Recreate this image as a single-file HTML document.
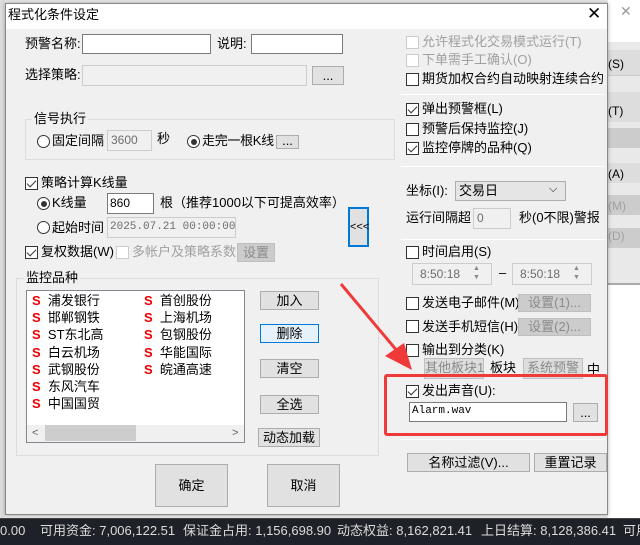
<!DOCTYPE html>
<html><head><meta charset="utf-8"><style>
*{margin:0;padding:0;box-sizing:border-box}
body{width:640px;height:545px;position:relative;overflow:hidden;background:#e9e9e9;font-family:"Liberation Sans","Noto Sans CJK SC",sans-serif;font-size:13px;color:#000}
.a{position:absolute;white-space:nowrap;line-height:16px}
.in{position:absolute;background:#fff;border:1px solid #7a7a7a;white-space:nowrap;overflow:hidden}
.dis{position:absolute;background:#f0f0f0;border:1px solid #ccc;color:#6d6d6d;font-size:12px;padding-left:3px;line-height:18px;white-space:nowrap;overflow:hidden}
.btn{position:absolute;background:#e1e1e1;border:1px solid #adadad;text-align:center;line-height:17px;white-space:nowrap}
.bd{position:absolute;background:#ccc;border:1px solid #bfbfbf;color:#8a8a8a;text-align:center;white-space:nowrap}
.cb{position:absolute;width:13px;height:13px;border:1px solid #333;background:#fff}
.cb.c::after{content:"";position:absolute;left:3px;top:0px;width:4px;height:8px;border:solid #333;border-width:0 1.5px 1.5px 0;transform:rotate(45deg)}
.cb.d{border-color:#ccc}
.rd{position:absolute;width:13px;height:13px;border:1px solid #333;border-radius:50%;background:#fff}
.rd.s::after{content:"";position:absolute;left:2.5px;top:2.5px;width:6px;height:6px;border-radius:50%;background:#333}
.hl{position:absolute;height:1px;background:#a0a0a0;border-bottom:1px solid #fff}
.gb{position:absolute;border:1px solid #dcdcdc}
.s{color:#e00;font-weight:bold;font-family:"Liberation Sans",sans-serif}
.gray{color:#a0a0a0}
</style></head><body>
<div style="position:absolute;left:608px;top:0;width:32px;height:42px;background:#fff"></div>
<div class="a" style="left:620px;top:3px;color:#999;font-size:14px">✕</div>
<div style="position:absolute;left:608px;top:50px;width:32px;height:26px;background:#ddd;border-bottom:1px solid #ccc"></div>
<div class="a" style="left:608px;top:56px;font-size:12px">(S)</div>
<div style="position:absolute;left:608px;top:92px;width:32px;height:30px;background:#ddd"></div>
<div class="a" style="left:608px;top:103px;font-size:12px">(T)</div>
<div style="position:absolute;left:608px;top:128px;width:32px;height:20px;background:#ccc"></div>
<div style="position:absolute;left:608px;top:163px;width:32px;height:20px;background:#ddd"></div>
<div class="a" style="left:608px;top:166px;font-size:12px">(A)</div>
<div style="position:absolute;left:608px;top:195px;width:32px;height:20px;background:#ccc"></div>
<div class="a gray" style="left:608px;top:198px;font-size:12px">(M)</div>
<div style="position:absolute;left:608px;top:228px;width:32px;height:20px;background:#ccc"></div>
<div class="a gray" style="left:608px;top:228px;font-size:12px">(D)</div>
<div style="position:absolute;left:608px;top:283px;width:32px;height:235px;background:#fff;border-top:2px solid #aaa"></div>
<div style="position:absolute;left:0;top:0;width:5px;height:518px;background:#ddd"></div>
<div style="position:absolute;left:5px;top:3px;width:603px;height:512px;background:#f0f0f0;border:1px solid #888;box-shadow:0 0 4px rgba(0,0,0,.3)"></div>
<div style="position:absolute;left:6px;top:4px;width:601px;height:25px;background:#fff"></div>
<div class="a" style="left:8px;top:7px;font-size:13px">程式化条件设定</div>
<div class="a" style="left:587px;top:6px;font-size:17px;font-weight:300">✕</div>

<div class="a" style="left:25px;top:36px">预警名称:</div>
<div class="in" style="left:82px;top:34px;width:129px;height:20px"></div>
<div class="a" style="left:217px;top:36px">说明:</div>
<div class="in" style="left:251px;top:34px;width:92px;height:20px"></div>
<div class="a" style="left:25px;top:67px">选择策略:</div>
<div class="dis" style="left:82px;top:65px;width:225px;height:21px"></div>
<div class="btn" style="left:312px;top:66px;width:32px;height:19px">...</div>

<div class="gb" style="left:25px;top:119px;width:370px;height:41px"></div>
<div class="a" style="left:32px;top:111px;background:#f0f0f0;padding:0 2px">信号执行</div>
<div class="rd" style="left:37px;top:135px"></div>
<div class="a" style="left:52px;top:133px">固定间隔</div>
<div class="dis" style="left:107px;top:130px;width:45px;height:21px">3600</div>
<div class="a" style="left:157px;top:131px">秒</div>
<div class="rd s" style="left:187px;top:135px"></div>
<div class="a" style="left:202px;top:133px;letter-spacing:-0.3px">走完一根K线</div>
<div class="btn" style="left:276px;top:135px;width:23px;height:14px;line-height:10px">...</div>

<div class="cb c" style="left:25px;top:177px"></div>
<div class="a" style="left:41px;top:175px">策略计算K线量</div>
<div class="rd s" style="left:37px;top:197px"></div>
<div class="a" style="left:52px;top:195px">K线量</div>
<div class="in" style="left:107px;top:193px;width:47px;height:21px;font-size:12px;padding-left:2px;line-height:18px">860</div>
<div class="a" style="left:160px;top:195px">根（推荐1000以下可提高效率）</div>
<div class="rd" style="left:37px;top:221px"></div>
<div class="a" style="left:52px;top:220px">起始时间</div>
<div class="dis" style="left:107px;top:217px;width:129px;height:21px;font-family:'Liberation Mono',monospace;font-size:11px;padding-left:2px">2025.07.21 00:00:00</div>
<div class="cb c" style="left:25px;top:246px"></div>
<div class="a" style="left:41px;top:244px">复权数据(W)</div>
<div class="cb d" style="left:116px;top:246px"></div>
<div class="a gray" style="left:132px;top:244px">多帐户及策略系数</div>
<div class="bd" style="left:237px;top:243px;width:38px;height:19px;line-height:17px">设置</div>

<div class="gb" style="left:16px;top:278px;width:363px;height:178px"></div>
<div class="a" style="left:24px;top:270px;background:#f0f0f0;padding:0 2px">监控品种</div>
<div class="in" style="left:26px;top:290px;width:219px;height:153px;border-color:#828790"></div>
<div style="position:absolute;left:27px;top:425px;width:217px;height:17px;background:#f0f0f0"></div>
<div style="position:absolute;left:45px;top:425px;width:91px;height:16px;background:#cdcdcd"></div>
<div class="a" style="left:32px;top:425px;color:#606060;font-size:11px">&lt;</div>
<div class="a" style="left:232px;top:425px;color:#606060;font-size:11px">&gt;</div>
<div class="a" style="left:32px;top:292px;line-height:17.2px"><span class="s">S</span>&nbsp; 浦发银行<br><span class="s">S</span>&nbsp; 邯郸钢铁<br><span class="s">S</span>&nbsp; ST东北高<br><span class="s">S</span>&nbsp; 白云机场<br><span class="s">S</span>&nbsp; 武钢股份<br><span class="s">S</span>&nbsp; 东风汽车<br><span class="s">S</span>&nbsp; 中国国贸</div>
<div class="a" style="left:144px;top:292px;line-height:17.2px"><span class="s">S</span>&nbsp; 首创股份<br><span class="s">S</span>&nbsp; 上海机场<br><span class="s">S</span>&nbsp; 包钢股份<br><span class="s">S</span>&nbsp; 华能国际<br><span class="s">S</span>&nbsp; 皖通高速</div>
<div class="btn" style="left:260px;top:291px;width:59px;height:19px">加入</div>
<div class="btn" style="left:260px;top:324px;width:59px;height:19px;background:#e5f1fb;border-color:#0078d7">删除</div>
<div class="btn" style="left:260px;top:359px;width:59px;height:19px">清空</div>
<div class="btn" style="left:260px;top:395px;width:59px;height:19px">全选</div>
<div class="btn" style="left:258px;top:428px;width:62px;height:19px">动态加载</div>
<div class="btn" style="left:155px;top:464px;width:73px;height:43px;line-height:41px">确定</div>
<div class="btn" style="left:267px;top:464px;width:73px;height:43px;line-height:41px">取消</div>
<div class="btn" style="left:348px;top:207px;width:21px;height:40px;border:2px solid #0078d7;line-height:36px;font-size:11px">&lt;&lt;&lt;</div>

<div class="cb d" style="left:406px;top:36px"></div>
<div class="a gray" style="left:422px;top:34px">允许程式化交易模式运行(T)</div>
<div class="cb d" style="left:406px;top:54px"></div>
<div class="a gray" style="left:422px;top:52px">下单需手工确认(O)</div>
<div class="cb" style="left:406px;top:73px"></div>
<div class="a" style="left:422px;top:71px">期货加权合约自动映射连续合约</div>
<div class="hl" style="left:401px;top:94px;width:204px"></div>
<div class="cb c" style="left:406px;top:103px"></div>
<div class="a" style="left:422px;top:101px">弹出预警框(L)</div>
<div class="cb" style="left:406px;top:123px"></div>
<div class="a" style="left:422px;top:121px">预警后保持监控(J)</div>
<div class="cb c" style="left:406px;top:142px"></div>
<div class="a" style="left:422px;top:140px">监控停牌的品种(Q)</div>
<div class="hl" style="left:401px;top:166px;width:204px"></div>
<div class="a" style="left:406px;top:183px">坐标(I):</div>
<div style="position:absolute;left:455px;top:181px;width:111px;height:20px;background:#e5e5e5;border:1px solid #adadad"></div>
<div class="a" style="left:459px;top:183px">交易日</div>
<div class="a" style="left:549px;top:181px;font-size:11px">⌵</div>
<div class="a" style="left:406px;top:210px">运行间隔超</div>
<div class="dis" style="left:473px;top:208px;width:38px;height:21px">0</div>
<div class="a" style="left:519px;top:210px">秒(0不限)警报</div>
<div class="hl" style="left:401px;top:239px;width:204px"></div>
<div class="cb" style="left:406px;top:246px"></div>
<div class="a" style="left:422px;top:244px">时间启用(S)</div>
<div class="dis" style="left:412px;top:263px;width:80px;height:22px;font-size:12px;padding-left:7px;line-height:20px">8:50:18</div>
<div class="dis" style="left:512px;top:263px;width:80px;height:22px;font-size:12px;padding-left:7px;line-height:20px">8:50:18</div>
<div class="a" style="left:473px;top:264px;font-size:7px;color:#888;line-height:9px">▲<br>▼</div>
<div class="a" style="left:573px;top:264px;font-size:7px;color:#888;line-height:9px">▲<br>▼</div>
<div class="a" style="left:499px;top:265px">–</div>
<div class="cb" style="left:406px;top:297px"></div>
<div class="a" style="left:422px;top:295px">发送电子邮件(M)</div>
<div class="bd" style="left:518px;top:294px;width:73px;height:18px;line-height:16px">设置(1)...</div>
<div class="cb" style="left:406px;top:320px"></div>
<div class="a" style="left:422px;top:319px">发送手机短信(H)</div>
<div class="bd" style="left:518px;top:318px;width:73px;height:18px;line-height:16px">设置(2)...</div>
<div class="cb" style="left:406px;top:344px"></div>
<div class="a" style="left:422px;top:342px">输出到分类(K)</div>
<div class="bd" style="left:424px;top:358px;width:60px;height:21px;background:#ddd;line-height:18px">其他板块1</div>
<div class="a" style="left:490px;top:360px">板块</div>
<div class="bd" style="left:523px;top:358px;width:60px;height:21px;background:#ddd;line-height:18px">系统预警</div>
<div class="a" style="left:587px;top:362px">中</div>
<div style="position:absolute;left:384px;top:374px;width:224px;height:62px;border:3px solid #f03a3a;border-radius:3px"></div>
<div class="cb c" style="left:406px;top:385px"></div>
<div class="a" style="left:422px;top:383px">发出声音(U):</div>
<div class="in" style="left:409px;top:402px;width:158px;height:20px;font-family:'Liberation Mono',monospace;font-size:11px;padding-left:2px;line-height:16px">Alarm.wav</div>
<div class="btn" style="left:573px;top:403px;width:25px;height:19px">...</div>
<div class="hl" style="left:401px;top:439px;width:204px"></div>
<div class="btn" style="left:407px;top:453px;width:123px;height:19px">名称过滤(V)...</div>
<div class="btn" style="left:534px;top:453px;width:73px;height:19px">重置记录</div>

<svg style="position:absolute;left:0;top:0" width="640" height="545">
<path d="M341,284 L398,352" stroke="#f03a3a" stroke-width="3" fill="none"/>
<path d="M385,356 L412,370 L404,343 Z" fill="#f03a3a"/>
</svg>

<div style="position:absolute;left:0;top:518px;width:640px;height:27px;background:#1e2127;border-top:1px solid #444"></div>
<div class="a" style="left:0;top:523px;color:#dcdcdc;font-size:13px">0.00</div>
<div class="a" style="left:40px;top:523px;color:#dcdcdc">可用资金: 7,006,122.51</div>
<div class="a" style="left:183px;top:523px;color:#dcdcdc">保证金占用: 1,156,698.90</div>
<div class="a" style="left:337px;top:523px;color:#dcdcdc">动态权益: 8,162,821.41</div>
<div class="a" style="left:481px;top:523px;color:#dcdcdc">上日结算: 8,128,386.41</div>
<div class="a" style="left:623px;top:523px;color:#dcdcdc">可用</div>
</body></html>
